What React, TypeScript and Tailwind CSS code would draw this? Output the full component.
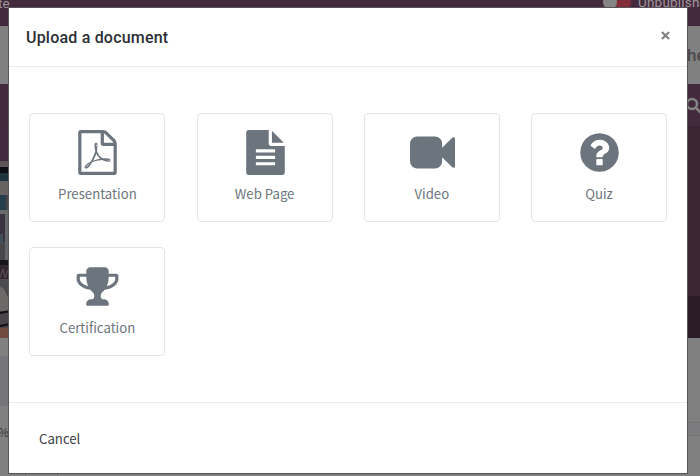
import React from "react";

const PDF =
  "M1596 380q28 28 48 76t20 88v1152q0 40-28 68t-68 28h-1344q-40 0-68-28t-28-68v-1600q0-40 28-68t68-28h896q40 0 88 20t76 48zm-444-244v376h376q-10-29-22-41l-313-313q-12-12-41-22zm384 1528v-1024h-416q-40 0-68-28t-28-68v-416h-768v1536h1280zm-514-593q33 26 84 56 59-7 117-7 147 0 177 49 16 22 2 52 0 1-1 2l-2 2v1q-6 38-71 38-48 0-115-20t-130-53q-221 24-392 83-153 262-242 262-15 0-28-7l-24-12q-1-1-6-5-10-10-6-36 9-40 56-91.5t132-96.5q14-9 23 6 2 2 2 4 52-85 107-197 68-136 104-262-24-82-30.5-159.5t6.5-127.5q11-40 42-40h22q23 0 35 15 18 21 9 68-2 6-4 8 1 3 1 8v30q-2 123-14 192 55 164 146 238zm-576 411q52-24 137-158-51 40-87.5 84t-49.5 74zm398-920q-15 42-2 132 1-7 7-44 0-3 7-43 1-4 4-8-1-1-1-2t-1-2q-1-22-13-36 0 1-1 2v2zm-124 661q135-54 284-81-2-1-13-9.5t-16-13.5q-76-67-127-176-27 86-83 197-30 56-45 83zm646-16q-24-24-140-24 76 28 124 28 14 0 18-1 0-1-2-3z";
const PAGE =
  "M1596 476q14 14 28 36h-472v-472q22 14 36 28zM1120 640h544v1056q0 40-28 68t-68 28h-1344q-40 0-68-28t-28-68v-1600q0-40 28-68t68-28h800v544q0 40 28 68t68 28zM1280 1376v-64q0-14-9-23t-23-9h-704q-14 0-23 9t-9 23v64q0 14 9 23t23 9h704q14 0 23-9t9-23zM1280 1120v-64q0-14-9-23t-23-9h-704q-14 0-23 9t-9 23v64q0 14 9 23t23 9h704q14 0 23-9t9-23zM1280 864v-64q0-14-9-23t-23-9h-704q-14 0-23 9t-9 23v64q0 14 9 23t23 9h704q14 0 23-9t9-23z";
const VIDEO =
  "M1792 352v1088q0 42-39 59-13 5-25 5-27 0-45-19l-403-403v166q0 119-84.5 203.5t-203.5 84.5h-704q-119 0-203.5-84.5t-84.5-203.5v-704q0-119 84.5-203.5t203.5-84.5h704q119 0 203.5 84.5t84.5 203.5v165l403-402q18-19 45-19 12 0 25 5 39 17 39 59z";
const QUESTION =
  "M1024 1376v-192q0-14-9-23t-23-9h-192q-14 0-23 9t-9 23v192q0 14 9 23t23 9h192q14 0 23-9t9-23zm256-672q0-88-55.5-163t-138.5-116-170-41q-243 0-371 213-15 24 8 42l132 100q7 6 19 6 16 0 25-12 53-68 86-92 34-24 86-24 48 0 85.5 26t37.5 59q0 38-20 61t-68 45q-63 28-115.5 86.5t-52.5 125.5v36q0 14 9 23t23 9h192q14 0 23-9t9-23q0-19 21.5-49.5t54.5-49.5q32-18 49-28.5t46-35 44.5-48 28-60.5 12.5-81zm384 192q0 209-103 385.5t-279.5 279.5-385.5 103-385.5-103-279.5-279.5-103-385.5 103-385.5 279.5-279.5 385.5-103 385.5 103 279.5 279.5 103 385.5z";
const TROPHY =
  "M522 883q-74-162-74-371h-256v96q0 78 94.5 162t235.5 113zm1078-275v-96h-256q0 209-74 371 141-29 235.5-113t94.5-162zm128-128v128q0 71-41.5 143t-112 130-173 97.5-215.5 44.5q-42 54-95 95-38 34-52.5 72.5t-14.5 89.5q0 54 30.5 91t97.5 37q75 0 133.5 45.5t58.5 114.5v64q0 14-9 23t-23 9h-832q-14 0-23-9t-9-23v-64q0-69 58.5-114.5t133.5-45.5q67 0 97.5-37t30.5-91q0-51-14.5-89.5t-52.5-72.5q-53-41-95-95-113-5-215.5-44.5t-173-97.5-112-130-41.5-143v-128q0-40 28-68t68-28h288v-96q0-66 47-113t113-47h576q66 0 113 47t47 113v96h288q40 0 68 28t28 68z";

const items = [
  { label: "Presentation", path: PDF },
  { label: "Web Page", path: PAGE },
  { label: "Video", path: VIDEO },
  { label: "Quiz", path: QUESTION },
  { label: "Certification", path: TROPHY },
];

function Tile({ label, path }: { label: string; path: string }) {
  return (
    <button className="flex h-[109px] w-[136px] flex-col items-center rounded-[4px] border border-[#e3e5e8] pt-4 text-[#6c757d]">
      <svg viewBox="0 0 1792 1792" className="ml-px h-[45px] w-[45px] shrink-0" fill="currentColor">
        <path d={path} />
      </svg>
      <span className="mt-[9px] text-[13.2px] leading-5">{label}</span>
    </button>
  );
}

function Photo() {
  return (
    <svg width="10" height="188" viewBox="0 0 10 188" className="block shrink-0">
      <rect width="10" height="188" fill="#484648" />
      <rect width="10" height="11" fill="#44293e" />
      <rect y="11" width="10" height="6" fill="#5b5759" />
      <rect y="17" width="10" height="6" fill="#0d1015" />
      <rect y="23" width="10" height="8" fill="#203440" />
      <rect y="31" width="10" height="14" fill="#656463" />
      <rect y="45" width="6" height="15" fill="#263f4b" />
      <rect y="60" width="10" height="4" fill="#67686a" />
      <rect y="64" width="5" height="28" fill="#39343f" />
      <rect y="84" width="3" height="10" fill="#434f58" />
      <rect x="5" y="64" width="5" height="46" fill="#66676a" />
      <rect y="110" width="10" height="5" fill="#15161b" />
      <rect y="115" width="10" height="14" fill="#33272f" />
      <path d="M0 128l3-9 2 9 3-8" stroke="#5d5359" fill="none" />
      <rect y="129" width="10" height="11" fill="#4c4b4e" />
      <path d="M0 136l4 3 4 8v14H0z" fill="#6b6867" />
      <path d="M0 163l10-2M0 176l10-2" stroke="#100e11" strokeWidth="2" />
      <rect y="178" width="10" height="10" fill="#704b3d" />
    </svg>
  );
}

function Backdrop() {
  return (
    <div className="flex h-full flex-col bg-[#808080] text-[#9e959c]">
      <div className="flex h-[26px] shrink-0 justify-between overflow-hidden bg-[#432a3d] font-['Roboto',sans-serif] text-[13.5px]">
        <span className="-mt-[7px] -ml-[2px]">te</span>
        <div className="flex w-[97px]">
          <div className="-mt-[5px] h-[14px] w-[28px] shrink-0 rounded-full bg-[#832d38]">
            <div className="h-[14px] w-[14px] rounded-full bg-[#858585]" />
          </div>
          <span className="-mt-[8px] ml-[7px] tracking-[0.2px]">Unpublished</span>
        </div>
      </div>
      <div className="flex h-[58px] shrink-0 justify-end overflow-hidden">
        <span className="mt-[17px] w-[13px] font-['Roboto',sans-serif] text-[17px] font-medium text-[#4c484b]">he</span>
      </div>
      <div className="flex h-[42px] shrink-0 justify-end overflow-hidden bg-[#432a3d]">
        <svg viewBox="0 0 18 18" className="mt-[13px] -mr-[3px] h-[18px] w-[18px]" fill="none" stroke="#858585" strokeWidth="2.5">
          <circle cx="7" cy="7" r="5" />
          <path d="m11 11 5 5" />
        </svg>
      </div>
      <div className="flex h-[212px] shrink-0 justify-between bg-[#3a2535]">
        <div className="h-6 w-[10px] bg-[#44293e] pt-6"><Photo /></div>
        <div className="flex w-[20px] flex-col justify-end"><div className="h-[42px] bg-[#2c1b28]" /></div>
      </div>
      <div className="flex flex-1 justify-between">
        <div className="w-[14px] pt-[18px]">
          <div className="h-[50px] bg-[#76767a]" />
          <div className="mt-[17px] -ml-[2px] font-['Noto_Sans_CJK_SC',sans-serif] text-[12px] leading-[18px] text-[#353237]">%</div>
        </div>
        <div className="w-[14px] pt-[84px]"><div className="h-[14px] border-y border-[#737376] bg-[#7b7b7d]" /></div>
      </div>
    </div>
  );
}

export default function App() {
  return (
    <div className="relative h-[476px] w-[700px] overflow-hidden">
      <Backdrop />
      <div className="absolute top-[472px] left-[25px] h-1 w-[33px] border-x border-[#6f6f6f]" />
      <div className="absolute top-[7px] left-2 flex h-[467px] w-[680px] flex-col border border-[#595459] bg-white font-['Noto_Sans_CJK_SC',sans-serif]">
        <header className="flex h-[59px] shrink-0 items-center justify-between border-b border-[#e9ecef] pr-4 pl-[17px]">
          <h1 className="mt-[2px] font-['Roboto',sans-serif] text-[16px] font-medium tracking-[0.2px] text-[#2b2f34]">Upload a document</h1>
          <button aria-label="Close" className="-mt-[3px] flex h-3 w-3 items-center justify-center">
            <svg viewBox="0 0 10 10" className="h-[9px] w-[9px]" stroke="#7f7f7f" strokeWidth="2.3">
              <path d="M1 1l8 8M9 1L1 9" />
            </svg>
          </button>
        </header>
        <main className="flex-1 pt-[46px] pr-[20px] pl-[20.4px]">
          <div className="grid grid-cols-[repeat(4,136px)] justify-between gap-y-[25px]">
            {items.map((item) => (
              <Tile key={item.label} {...item} />
            ))}
          </div>
        </main>
        <footer className="flex h-[71px] shrink-0 items-center border-t border-[#e9ecef] px-[30px] pt-[2px]">
          <button className="text-[13.2px] leading-5 text-[#3c4046]">Cancel</button>
        </footer>
      </div>
    </div>
  );
}
